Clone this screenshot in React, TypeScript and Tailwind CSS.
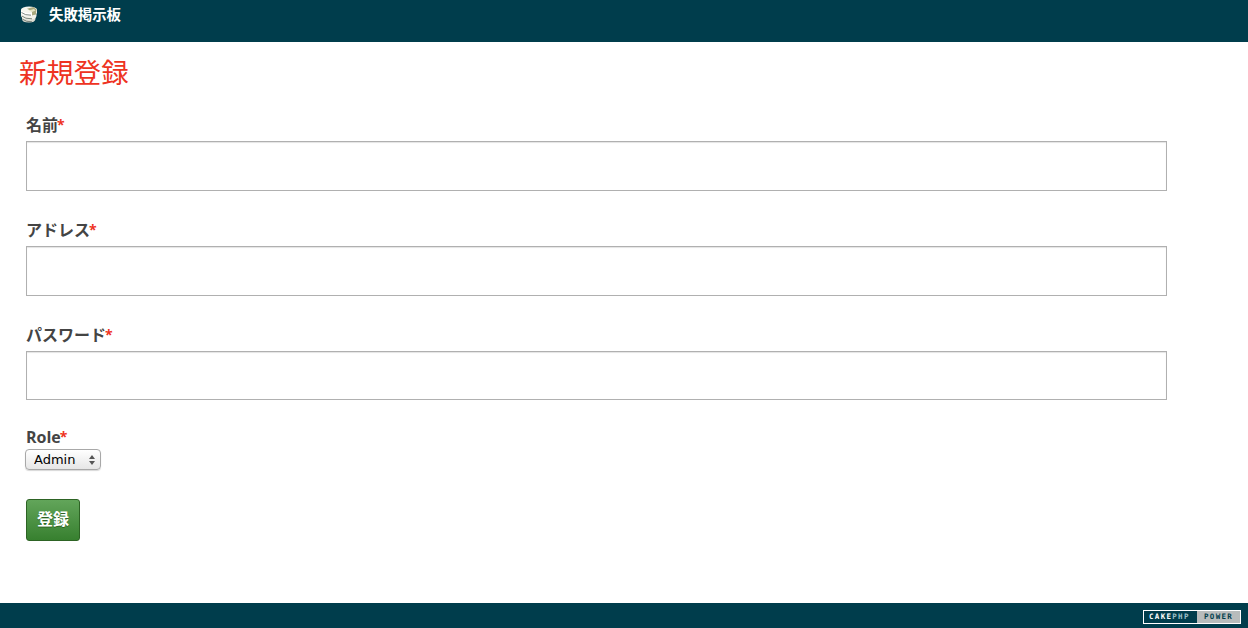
const CJK = "font-['Open_Sans','Noto_Sans_CJK_JP',sans-serif]";

function StackIcon() {
  return (
    <svg width="18" height="17" viewBox="0 0 18 17" className="block">
      <path d="M2 11 V13 Q2 16.5 9 16.5 Q15 16.5 15.5 13 V11 Z" fill="#dcdcd2" />
      <path d="M1 7 V10 Q2 13.5 9 13.5 Q16 13.5 16.5 10 V7 Z" fill="#f2f2ea" />
      <path d="M1 3.5 V6.5 Q2 10 9 10 Q16 10 17 6.5 V3.5 Z" fill="#ffffff" />
      <ellipse cx="9" cy="3.8" rx="8" ry="3.2" fill="#f6f6ee" />
      <path d="M7 2.8 L13.5 1 L16.5 3.5 L16 8.5 L12 9.5 L12 5.5 Z" fill="#a9a97e" />
      <path d="M9 4.5 L14 3 L15.5 4.5 L12 6 Z" fill="#e4e4c4" />
      <path d="M1.5 6.5 Q5 9.5 11 9.2 M1.8 10 Q5 13 12 12.8 M2.5 13.2 Q6 16 12 15.8" stroke="#5c6860" strokeWidth="0.8" fill="none" />
    </svg>
  );
}

function Required() {
  return <span className="ml-[-1px] align-[1px] text-[14px] text-[#e32]">*</span>;
}

function Field({ label, last }: { label: string; last?: boolean }) {
  return (
    <div className="mb-[27px]">
      <label className="block h-[28px] pt-[1.5px] text-[16px] leading-[20px] font-bold text-[#444]">
        {label}
        <Required />
      </label>
      <input
        type="text"
        className={`block w-[1141px] ${last ? 'h-[49px]' : 'h-[50px]'} border border-[#b0b0b0] bg-white shadow-[inset_0_1px_1px_#e4e4e4]`}
      />
    </div>
  );
}

function RoleSelect() {
  return (
    <div className="relative ml-[-1px] h-[21px] w-[76px]">
      <select
        defaultValue="Admin"
        className="block h-[21px] w-[76px] appearance-none rounded-[4px] border border-[#a8a8a8] bg-gradient-to-b from-white to-[#e6e6e6] pl-[8px] font-['DejaVu_Sans',sans-serif] text-[13px] leading-[19px] text-black shadow-[0_1px_1px_#d8d8d8]"
      >
        <option>Admin</option>
        <option>Author</option>
      </select>
      <svg width="6" height="10" viewBox="0 0 6 10" className="pointer-events-none absolute top-[6px] right-[6px]">
        <path d="M3 0 L6 4 H0 Z M0 6 H6 L3 10 Z" fill="#555" />
      </svg>
    </div>
  );
}

function PoweredBadge() {
  return (
    <div className="flex h-[14px] w-[98px] border border-white font-['DejaVu_Sans_Mono',monospace] text-[7.5px] leading-[12px] font-bold tracking-[1.3px]">
      <div className="w-[53px] bg-[#003d4c] pl-[5px] text-white">
        CAKE<span className="text-[#9fc0c8]">PHP</span>
      </div>
      <div className="flex-1 bg-[#b8bcbc] pl-[7px] text-[#003d4c]">POWER</div>
    </div>
  );
}

export default function App() {
  return (
    <div className={`flex h-[628px] flex-col bg-white ${CJK}`}>
      <header className="flex h-[42px] items-start bg-[#003d4c] pt-[6px] pl-[20px]">
        <StackIcon />
        <span className="ml-[11px] text-[14.4px] leading-[17px] font-bold text-white">失敗掲示板</span>
      </header>

      <main className="flex-1 pt-[13px]">
        <h2 className="pl-[19px] text-[27.4px] leading-[36px] font-normal text-[#e32]">新規登録</h2>
        <form className="pt-[22px] pl-[26px]">
          <Field label="名前" />
          <Field label="アドレス" />
          <Field label="パスワード" last />
          <label className="block h-[22px] pt-[1px] text-[16px] leading-[18px] font-bold text-[#444]">
            Role
            <Required />
          </label>
          <RoleSelect />
          <button
            type="button"
            className="mt-[29px] block h-[42px] w-[54px] rounded-[3px] border border-[#2d6324] bg-gradient-to-b from-[#62a55a] to-[#37802f] pb-[2px] text-[16px] font-bold text-white [text-shadow:0_1px_0_#2d6324]"
          >
            登録
          </button>
        </form>
      </main>

      <footer className="flex h-[25px] items-start justify-end bg-[#003d4c] pt-[7px] pr-[7px]">
        <PoweredBadge />
      </footer>
    </div>
  );
}
